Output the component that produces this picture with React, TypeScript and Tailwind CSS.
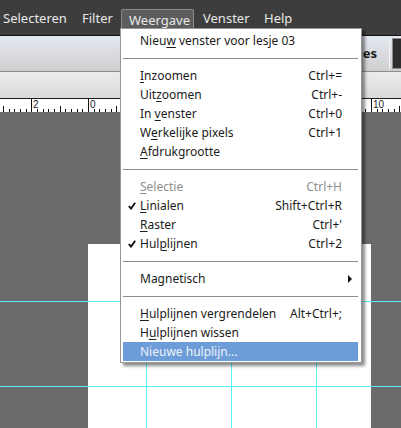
import React from 'react';

type MenuEntry =
  | { sep: true }
  | {
      sep?: false;
      label: string;
      u?: number;
      shortcut?: string;
      checked?: boolean;
      disabled?: boolean;
      submenu?: boolean;
      active?: boolean;
    };

const menuItems: MenuEntry[] = [
  { label: 'Nieuw venster voor lesje 03', u: 4 },
  { sep: true },
  { label: 'Inzoomen', u: 0, shortcut: 'Ctrl+=' },
  { label: 'Uitzoomen', u: 3, shortcut: 'Ctrl+-' },
  { label: 'In venster', u: 3, shortcut: 'Ctrl+0' },
  { label: 'Werkelijke pixels', u: 1, shortcut: 'Ctrl+1' },
  { label: 'Afdrukgrootte', u: 0 },
  { sep: true },
  { label: 'Selectie', u: 0, shortcut: 'Ctrl+H', disabled: true },
  { label: 'Linialen', u: 0, shortcut: 'Shift+Ctrl+R', checked: true },
  { label: 'Raster', u: 0, shortcut: "Ctrl+'" },
  { label: 'Hulplijnen', u: 3, shortcut: 'Ctrl+2', checked: true },
  { sep: true },
  { label: 'Magnetisch', submenu: true },
  { sep: true },
  { label: 'Hulplijnen vergrendelen', u: 0, shortcut: 'Alt+Ctrl+;' },
  { label: 'Hulplijnen wissen', u: 1 },
  { label: 'Nieuwe hulplijn...', active: true },
];

const topMenus = [
  { label: 'Selecteren', cls: 'w-[79px] -ml-[4px] pl-[7px]' },
  { label: 'Filter', cls: 'w-[46px] pl-[7px]' },
  { label: 'Weergave', cls: 'w-[73px] pl-[7px]', open: true },
  { label: 'Venster', cls: 'w-[61px] pl-[9px]' },
  { label: 'Help', cls: 'w-[50px] pl-[9px]' },
];

function Mnemonic({ text, u }: { text: string; u?: number }) {
  if (u === undefined || u < 0) return <>{text}</>;
  return (
    <>
      {text.slice(0, u)}
      <span className="underline underline-offset-[2px] decoration-1">{text[u]}</span>
      {text.slice(u + 1)}
    </>
  );
}

function Ruler() {
  const origin = 88;
  const major = 56.6;
  const step = major / 10;
  const ticks: React.ReactNode[] = [];
  for (let i = -20; i <= 60; i++) {
    const x = origin + i * step;
    if (x < 0 || x > 401) continue;
    const isMajor = i % 10 === 0;
    const isHalf = !isMajor && Math.abs(i % 10) === 5;
    const h = isMajor ? 13 : isHalf ? 6 : 3;
    ticks.push(
      <line key={i} x1={Math.round(x) + 0.5} x2={Math.round(x) + 0.5} y1={13 - h} y2={13} stroke="#111" strokeWidth={1} />
    );
  }
  const labels = [
    { x: 31.4, t: '2' },
    { x: 88, t: '0' },
    { x: 371, t: '10' },
  ];
  return (
    <div className="h-[14px] bg-white border-t border-[#1c1c1c]">
      <svg width="401" height="13" className="block">
        {ticks}
        {labels.map((l) => (
          <text key={l.t + l.x} x={Math.round(l.x) + 2} y={9} fontSize="10" fontFamily="'Liberation Sans', sans-serif" fill="#1a1a1a">
            {l.t}
          </text>
        ))}
      </svg>
    </div>
  );
}

function Check() {
  return (
    <svg width="8" height="8" viewBox="0 0 8 8" className="block">
      <polyline points="0.8,4 3,6.6 7.2,0.8" fill="none" stroke="#111" strokeWidth="1.9" />
    </svg>
  );
}

function DropMenu() {
  return (
    <div className="absolute left-[120px] top-[28px] w-[242px] bg-white border border-[#979797] pt-[2px] pb-[1px] shadow-[3px_3px_3px_rgba(0,0,0,0.45)] text-[12px] text-[#1b1b1b]">
      {menuItems.map((item, i) => {
        if (item.sep) {
          return (
            <div key={i} className="h-4 flex items-center pl-[2px] pr-[3px]">
              <div className="h-px w-full bg-[#8d8d8d]" />
            </div>
          );
        }
        return (
          <div
            key={i}
            className={`h-[19px] mx-[2px] mr-[3px] flex items-center relative ${
              item.active ? 'bg-[#6c9dd9] text-[#eef2f8]' : item.disabled ? 'text-[#8f8f8f]' : ''
            }`}
          >
            <div className="w-[17px] flex justify-end pr-[1px]">
              {item.checked && <div className="-ml-[6px] mr-[3px]"><Check /></div>}
            </div>
            <span className="flex-1 whitespace-nowrap">
              <Mnemonic text={item.label} u={item.u} />
            </span>
            {item.shortcut && <span className="pr-[16px] whitespace-nowrap">{item.shortcut}</span>}
            {item.submenu && (
              <svg width="4" height="8" viewBox="0 0 4 8" className="mr-[6px]">
                <polygon points="0,0 4,4 0,8" fill="#111" />
              </svg>
            )}
          </div>
        );
      })}
    </div>
  );
}

export default function App() {
  return (
    <div className="relative w-[401px] h-[428px] overflow-hidden bg-[#6b6b6b] font-['Noto_Sans',sans-serif]">
      {/* menu bar */}
      <div className="h-[36px] bg-[#3d3d3d] border-b border-[#111] flex pt-[9px] text-[13px] text-[#e8e8e8]">
        {topMenus.map((m) => (
          <div
            key={m.label}
            className={`${m.cls} h-[19px] flex items-center shrink-0 ${
              m.open ? 'bg-[#5d5d5d] border border-b-0 border-[#8a8a8a] rounded-t-[2px] h-[27px] items-start pt-[1px]' : ''
            }`}
          >
            {m.label}
          </div>
        ))}
      </div>

      {/* options bar */}
      <div className="h-[36px] bg-gradient-to-b from-[#e4e8f0] to-[#cfcfcf] border-b border-[#8e8e8e] flex items-center justify-end">
        <span className="text-[13px] font-bold text-[#1a1a1a] whitespace-nowrap">Opties</span>
        <div className="w-px h-[30px] bg-[#f4f4f4] ml-[12px]" />
        <div className="w-[20px] h-[31px] bg-[#2e2e2e] border border-[#8c8c8c] ml-[2px] -mr-[11px]" />
      </div>

      {/* tab bar */}
      <div className="h-[26px] bg-gradient-to-b from-[#ececec] to-[#dadada]" />

      <Ruler />

      {/* canvas */}
      <div className="relative h-[316px] bg-[#6b6b6b]">
        <div className="absolute left-[88px] top-[132px] w-[283px] h-[184px] bg-white" />
        <div className="absolute left-[146px] top-[132px] w-px h-[184px] bg-[#55f4f4]" />
        <div className="absolute left-[231px] top-[132px] w-px h-[184px] bg-[#55f4f4]" />
        <div className="absolute left-[316px] top-[132px] w-px h-[184px] bg-[#55f4f4]" />
        <div className="absolute left-0 top-[189px] w-full h-px bg-[#55f4f4]" />
        <div className="absolute left-0 top-[274px] w-full h-px bg-[#55f4f4]" />
      </div>

      <DropMenu />
    </div>
  );
}
